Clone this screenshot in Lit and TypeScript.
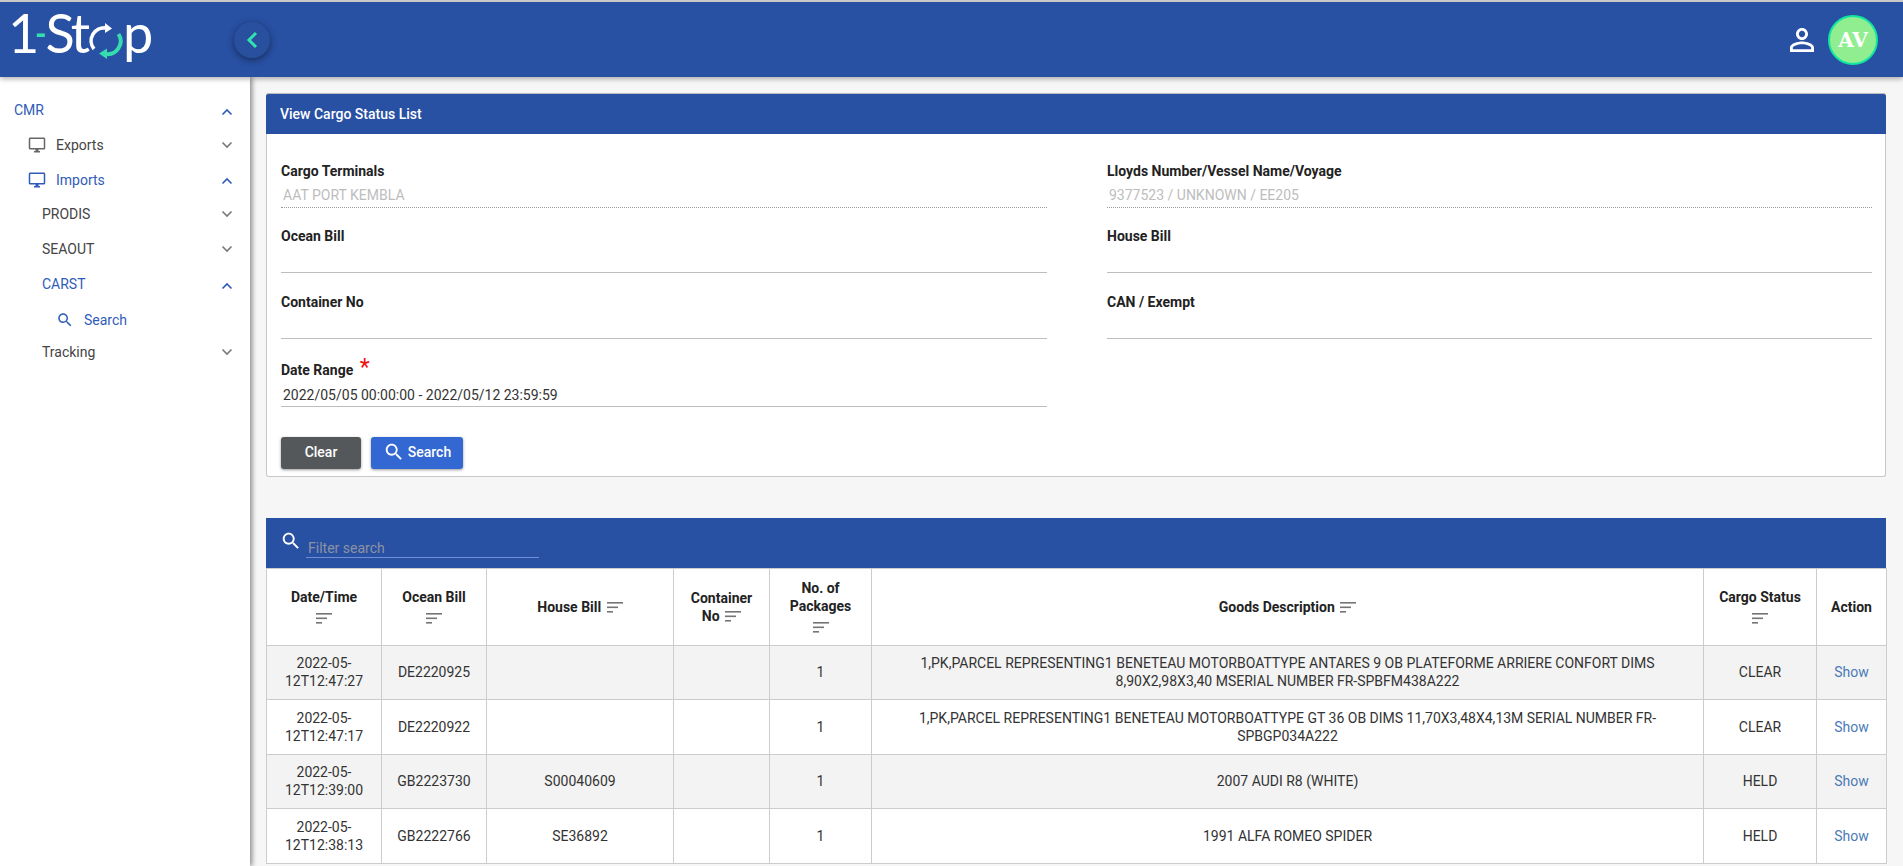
import { LitElement, html, css, svg } from "lit";
import { customElement } from "lit/decorators.js";

const SEARCH = "M15.5 14h-.79l-.28-.27C15.41 12.59 16 11.11 16 9.5 16 5.91 13.09 3 9.5 3S3 5.91 3 9.5 5.91 16 9.5 16c1.61 0 3.09-.59 4.23-1.57l.27.28v.79l5 4.99L20.49 19l-4.99-5zm-6 0C7.01 14 5 11.99 5 9.5S7.01 5 9.5 5 14 7.01 14 9.5 11.99 14 9.5 14z";
const MONITOR = "M21 2H3c-1.1 0-2 .9-2 2v12c0 1.1.9 2 2 2h7v2H8v2h8v-2h-2v-2h7c1.1 0 2-.9 2-2V4c0-1.1-.9-2-2-2zm0 14H3V4h18v12z";
const PERSON = "M12 5.9c1.16 0 2.1.94 2.1 2.1s-.94 2.1-2.1 2.1S9.9 9.16 9.9 8s.94-2.1 2.1-2.1m0 9c2.97 0 6.1 1.46 6.1 2.1v1.1H5.9V17c0-.64 3.13-2.1 6.1-2.1M12 4C9.79 4 8 5.79 8 8s1.79 4 4 4 4-1.79 4-4-1.79-4-4-4zm0 9c-2.67 0-8 1.34-8 4v3h16v-3c0-2.66-5.33-4-8-4z";

const icon = (d: string, size: number, cls = "") =>
  html`<svg class=${cls} width=${size} height=${size} viewBox="0 0 24 24" fill="currentColor">${svg`<path d=${d}></path>`}</svg>`;

const chev = (up: boolean) =>
  html`<svg class="chev ${up ? "up" : ""}" width="12" height="8" viewBox="0 0 12 8" fill="none" stroke="currentColor" stroke-width="1.6">${svg`<polyline points=${up ? "1.5,6.5 6,2 10.5,6.5" : "1.5,1.5 6,6 10.5,1.5"}></polyline>`}</svg>`;

const sort = () =>
  html`<svg class="sort" width="16" height="11" viewBox="0 0 16 11" fill="#757575">${svg`<rect x="0" y="0" width="16" height="1.6"></rect><rect x="0" y="4.5" width="11" height="1.6"></rect><rect x="0" y="9" width="6" height="1.6"></rect>`}</svg>`;

interface Row { d: string; o: string; h: string; g: string; s: string; }
const ROWS: Row[] = [
  { d: "2022-05-12T12:47:27", o: "DE2220925", h: "", g: "1,PK,PARCEL REPRESENTING1 BENETEAU MOTORBOATTYPE ANTARES 9 OB PLATEFORME ARRIERE CONFORT DIMS 8,90X2,98X3,40 MSERIAL NUMBER FR-SPBFM438A222", s: "CLEAR" },
  { d: "2022-05-12T12:47:17", o: "DE2220922", h: "", g: "1,PK,PARCEL REPRESENTING1 BENETEAU MOTORBOATTYPE GT 36 OB DIMS 11,70X3,48X4,13M SERIAL NUMBER FR-SPBGP034A222", s: "CLEAR" },
  { d: "2022-05-12T12:39:00", o: "GB2223730", h: "S00040609", g: "2007 AUDI R8 (WHITE)", s: "HELD" },
  { d: "2022-05-12T12:38:13", o: "GB2222766", h: "SE36892", g: "1991 ALFA ROMEO SPIDER", s: "HELD" },
];

@customElement("nav-menu")
class NavMenu extends LitElement {
  static styles = css`
    :host { display: block; padding-top: 16px; font: 14px/1 Roboto, sans-serif; color: #444; }
    .item { display: flex; align-items: center; height: 34.7px; padding-right: 17px; box-sizing: border-box; }
    .item .t { flex: 1; display: flex; align-items: center; }
    .on { color: #2f5cb8; }
    .l0 { padding-left: 14px; }
    .l1 { padding-left: 28px; }
    .l1 svg:first-child { margin-right: 10px; }
    .l2 { padding-left: 42px; }
    .l3 { padding-left: 56px; padding-top: 3px; }
    .l3 svg:first-child { margin-right: 10px; }
    .nudge { padding-top: 1px; }
    .last { margin-top: -1px; }
    .icon-grey { color: #666; }
    .chev { color: #777; }
    .chev.up { margin-top: 3px; }
    .on .chev { color: #2f5cb8; }
  `;
  render() {
    return html`
      <div class="item l0 on"><span class="t">CMR</span>${chev(true)}</div>
      <div class="item l1"><span class="t">${icon(MONITOR, 18, "icon-grey")}Exports</span>${chev(false)}</div>
      <div class="item l1 on"><span class="t">${icon(MONITOR, 18)}Imports</span>${chev(true)}</div>
      <div class="item l2"><span class="t">PRODIS</span>${chev(false)}</div>
      <div class="item l2"><span class="t">SEAOUT</span>${chev(false)}</div>
      <div class="item l2 on nudge"><span class="t">CARST</span>${chev(true)}</div>
      <div class="item l3 on"><span class="t">${icon(SEARCH, 18)}Search</span></div>
      <div class="item l2 last"><span class="t">Tracking</span>${chev(false)}</div>
    `;
  }
}

@customElement("app-root")
export class AppRoot extends LitElement {
  static styles = css`
    :host { display: block; height: 866px; overflow: hidden; background: #f6f6f6; font-family: Roboto, sans-serif; color: #333; }
    .top { position: relative; z-index: 3; height: 75px; border-top: 2px solid #c9c9c9; background: #2850a3; box-shadow: 0 2px 5px rgba(0,0,0,.3); display: flex; align-items: center; }
    .logo { width: 234px; padding: 0 0 13px 8px; box-sizing: border-box; display: flex; align-items: center; font: 400 54px/1 Lato, sans-serif; color: #fff; height: 75px; }
    .logo .one { letter-spacing: -4px; }
    .logo .dash { color: #35dcae; font-weight: 900; font-size: 30px; margin-right: -1px; }
    .logo .st { letter-spacing: -3px; }
    .logo svg { margin: 16px 0 0 2px; flex: none; }
    .back { width: 36px; height: 36px; border-radius: 50%; background: #28509f; box-shadow: 0 2px 7px rgba(0,0,0,.45); display: flex; align-items: center; justify-content: center; color: #35e3b0; }
    .spacer { flex: 1; }
    .person { color: #fff; margin-right: 8px; display: block; }
    .avatar { width: 46px; height: 46px; margin-right: 25px; border-radius: 50%; border: 2px solid #10e6a0; background: #90ee90; color: #fff; font: bold 20px/46px "DejaVu Serif", serif; text-align: center; }
    .body { display: flex; height: 789px; }
    nav-menu { width: 250px; flex: none; background: #fff; box-shadow: 2px 0 5px rgba(0,0,0,.45); position: relative; z-index: 2; }
    main { flex: 1; min-width: 0; padding: 16px 17px 0 16px; box-sizing: border-box; overflow: hidden; }
    .card { background: #fff; border: 1px solid #c8c8c8; border-top: none; border-radius: 3px; height: 384px; box-sizing: border-box; }
    .card-h { height: 41px; background: #2850a3; color: #fff; font: 500 14px/40px Roboto, sans-serif; padding-left: 14px; margin: 0 -1px; border-top: 1px solid #bbb; box-sizing: border-box; border-radius: 3px 3px 0 0; }
    .form { display: grid; grid-template-columns: 766px 765px; column-gap: 60px; padding: 29px 0 0 14px; grid-auto-rows: 65.4px; }
    .f label { display: block; font: 700 14px/17px Roboto, sans-serif; color: #222; }
    .f .v { height: 25px; margin-top: 3px; padding: 5px 2px 0; box-sizing: border-box; font: 14px/15px Roboto, sans-serif; color: #333; border-bottom: 1px solid #bdbdbd; }
    .f .v.dis { color: #bdbdbd; border-bottom: 1px dotted #999; }
    .date { padding-top: 3px; }
    .date .v { padding-top: 6px; }
    .star { color: #f01010; font-size: 23px; line-height: 10px; margin-left: 3px; font-weight: 400; }
    .btns { display: flex; gap: 10px; padding: 0 0 0 14px; margin-top: 12px; }
    .btn { height: 32px; padding-bottom: 2px; box-sizing: border-box; border-radius: 3px; color: #fff; font: 500 14px/30px Roboto, sans-serif; display: flex; align-items: center; justify-content: center; box-shadow: 0 1px 3px rgba(0,0,0,.4); }
    .clear { width: 80px; background: #54585a; }
    .search { width: 92px; background: #3367d1; gap: 3px; }
    .tb { margin-top: 41px; height: 50px; background: #2850a3; display: flex; padding-left: 14px; color: #fff; box-sizing: border-box; position: relative; }
    .tb svg { margin-top: 12px; }
    .tb .in { margin: 20px 0 0 4px; width: 233px; height: 20px; border-bottom: 1px solid #6f8fd8; color: #8d93a3; font: 14px/20px Roboto, sans-serif; padding-left: 2px; box-sizing: border-box; }
    table { border-collapse: collapse; table-layout: fixed; width: 1620px; background: #fff; font: 14px/18px Roboto, sans-serif; color: #333; }
    th, td { border: 1px solid #ccc; text-align: center; padding: 0 14px; vertical-align: middle; }
    th { height: 75.6px; font-weight: 700; color: #222; padding: 0 10px; }
    td { height: 53.5px; }
    tr:nth-child(odd) td { background: #f3f3f3; }
    td.link { color: #4a7ab5; padding: 0; }
    td.desc { padding: 0 40px; }
    .sort { vertical-align: -1px; margin-left: 2px; }
    th .sort-b svg { display: block; margin: 7px auto 2px; }
  `;

  private logo() {
    return html`<div class="logo"><span class="one">1</span><span class="dash">-</span><span class="st">St</span>
      <svg width="34" height="36" viewBox="0 0 34 36" fill="none">${svg`
        <path d="M5 26 A13 13 0 0 1 17 5" stroke="#fff" stroke-width="3.6"></path>
        <path d="M16 0 L23 5.5 L16 10 Z" fill="#fff"></path>
        <path d="M29.5 11 A13 13 0 0 1 17 31" stroke="#35dcae" stroke-width="4"></path>
        <path d="M18 25.5 L10 30.5 L18 36 Z" fill="#35dcae"></path>`}
      </svg><span>p</span></div>`;
  }

  render() {
    return html`
      <div class="top">
        ${this.logo()}
        <div class="back"><svg width="14" height="18" viewBox="0 0 14 18" fill="none" stroke="currentColor" stroke-width="3">${svg`<polyline points="11,2 4,9 11,16"></polyline>`}</svg></div>
        <div class="spacer"></div>
        ${icon(PERSON, 36, "person")}
        <div class="avatar">AV</div>
      </div>
      <div class="body">
        <nav-menu></nav-menu>
        <main>
          <section class="card">
            <div class="card-h">View Cargo Status List</div>
            <div class="form">
              <div class="f"><label>Cargo Terminals</label><div class="v dis">AAT PORT KEMBLA</div></div>
              <div class="f"><label>Lloyds Number/Vessel Name/Voyage</label><div class="v dis">9377523 / UNKNOWN / EE205</div></div>
              <div class="f"><label>Ocean Bill</label><div class="v"></div></div>
              <div class="f"><label>House Bill</label><div class="v"></div></div>
              <div class="f"><label>Container No</label><div class="v"></div></div>
              <div class="f"><label>CAN / Exempt</label><div class="v"></div></div>
              <div class="f date"><label>Date Range <span class="star">*</span></label><div class="v">2022/05/05 00:00:00 - 2022/05/12 23:59:59</div></div>
            </div>
            <div class="btns">
              <div class="btn clear">Clear</div>
              <div class="btn search">${icon(SEARCH, 22)}Search</div>
            </div>
          </section>
          <div class="tb">${icon(SEARCH, 22)}<div class="in">Filter search</div></div>
          <table>
            <colgroup>
              <col style="width:115px"><col style="width:105px"><col style="width:187px"><col style="width:96px"><col style="width:102px"><col style="width:832px"><col style="width:113px"><col style="width:70px">
            </colgroup>
            <thead><tr>
              <th>Date/Time<span class="sort-b">${sort()}</span></th>
              <th>Ocean Bill<span class="sort-b">${sort()}</span></th>
              <th>House Bill ${sort()}</th>
              <th>Container No ${sort()}</th>
              <th>No. of Packages<span class="sort-b">${sort()}</span></th>
              <th>Goods Description ${sort()}</th>
              <th>Cargo Status<span class="sort-b">${sort()}</span></th>
              <th>Action</th>
            </tr></thead>
            <tbody>
              ${ROWS.map((r) => html`<tr>
                <td>${r.d}</td><td>${r.o}</td><td>${r.h}</td><td></td><td>1</td>
                <td class="desc">${r.g}</td><td>${r.s}</td><td class="link">Show</td>
              </tr>`)}
            </tbody>
          </table>
        </main>
      </div>
    `;
  }
}
void NavMenu;
